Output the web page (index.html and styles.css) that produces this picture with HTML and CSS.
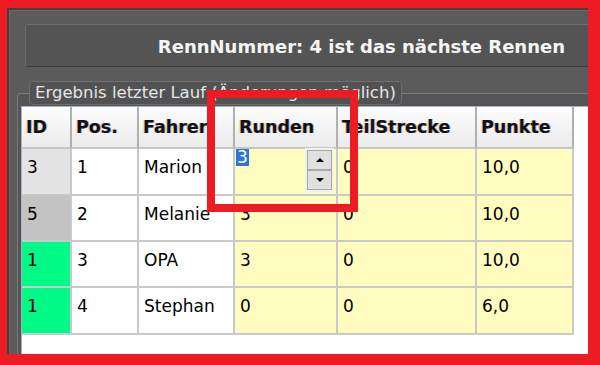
FILE: index.html
```html
<!DOCTYPE html>
<html lang="de">
<head>
    <meta charset="UTF-8">
    <meta name="viewport" content="width=device-width, initial-scale=1.0">
    <title>Rennergebnis</title>
    <link rel="stylesheet" href="styles.css">
</head>
<body>
    <div id="window">
        <div id="race-panel">RennNummer: 4 ist das nächste Rennen</div>

        <fieldset id="result-box">
            <legend>Ergebnis letzter Lauf (Änderungen möglich)</legend>
            <div class="grid">
                <div class="head">ID</div>
                <div class="head">Pos.</div>
                <div class="head">Fahrer</div>
                <div class="head">Runden</div>
                <div class="head">TeilStrecke</div>
                <div class="head">Punkte</div>

                <div class="cell id-light">3</div>
                <div class="cell">1</div>
                <div class="cell">Marion</div>
                <div class="cell yellow edit">
                    <span class="sel">3</span>
                    <span class="spin"><span class="up"></span><span class="down"></span></span>
                </div>
                <div class="cell yellow">0</div>
                <div class="cell yellow">10,0</div>

                <div class="cell id-gray">5</div>
                <div class="cell">2</div>
                <div class="cell">Melanie</div>
                <div class="cell yellow">3</div>
                <div class="cell yellow">0</div>
                <div class="cell yellow">10,0</div>

                <div class="cell id-green">1</div>
                <div class="cell">3</div>
                <div class="cell">OPA</div>
                <div class="cell yellow">3</div>
                <div class="cell yellow">0</div>
                <div class="cell yellow">10,0</div>

                <div class="cell id-green">1</div>
                <div class="cell">4</div>
                <div class="cell">Stephan</div>
                <div class="cell yellow">0</div>
                <div class="cell yellow">0</div>
                <div class="cell yellow">6,0</div>
            </div>
        </fieldset>
    </div>

    <div id="frame"></div>
    <div id="marker"></div>
</body>
</html>
```

FILE: styles.css
```css
*{
    box-sizing: border-box;
}
body{
    margin: 0;
    width: 600px;
    height: 365px;
    overflow: hidden;
    background-color: #5b5b5b;
    font-family: "DejaVu Sans", Verdana, sans-serif;
}
#window{
    margin: 8px 0 0 7px;
    height: 357px;
    border-top: 2px solid #424242;
    border-left: 2px solid #424242;
    box-shadow: inset 1px 1px 0 #676767;
    background-color: #5b5b5b;
}
#race-panel{
    margin: 14px 5px 0 16px;
    height: 43px;
    padding: 11px 29px 0 0;
    border: 1px solid #6c6c6c;
    border-bottom-color: #3d3d3d;
    border-radius: 3px;
    background-color: #545454;
    color: #f5f5f5;
    font-size: 18px;
    font-weight: bold;
    line-height: 21px;
    text-align: right;
}
#result-box{
    margin: 14px -30px 0 8px;
    padding: 1px 0 0 3px;
    min-width: 0;
    border: 1px solid #7a7a7a;
    border-right: none;
    border-bottom: none;
    border-radius: 4px 0 0 0;
    background-color: #555;
}
legend{
    margin-left: 8px;
    padding: 0 5px;
    border: 1px solid #6e6e6e;
    border-radius: 4px;
    background-color: #525252;
    color: #e6e6e6;
    font-size: 16.5px;
    line-height: 22px;
}
.grid{
    display: grid;
    grid-template-columns: 50px 67px 96px 103px 139px 97px;
    grid-template-rows: 42px 47px 46px 46px 47px;
    align-content: start;
    height: 270px;
    border: 1px solid #a3b3c9;
    border-right: none;
    background-color: white;
}
.head{
    padding: 10px 0 0 4px;
    border-right: 2px solid #b0b0b0;
    border-bottom: 2px solid #c6c6c6;
    background: linear-gradient(#fdfdfd, #ebebeb);
    color: #111;
    font-size: 17.5px;
    font-weight: bold;
    line-height: 20px;
    white-space: nowrap;
    overflow: hidden;
    text-shadow: -1px 0 rgba(220, 130, 20, 0.45), 1px 0 rgba(30, 80, 210, 0.35);
}
.cell{
    padding: 8px 0 0 5px;
    border-right: 2px solid #c9c9c9;
    border-bottom: 2px solid #c9c9c9;
    color: #000;
    font-size: 17px;
    line-height: 20px;
    white-space: nowrap;
}
.yellow{
    background-color: #fffcc0;
}
.id-light{
    background-color: #e3e3e3;
}
.id-gray{
    background-color: #c3c3c3;
}
.id-green{
    background-color: #00fa87;
}
.edit{
    display: flex;
    justify-content: space-between;
    align-items: flex-start;
    padding: 0 4px 0 1px;
}
.sel{
    padding: 0 1px;
    background-color: #2f74da;
    color: white;
    line-height: 17px;
}
.spin{
    display: flex;
    flex-direction: column;
    margin-top: 1px;
    box-shadow: 0 0 0 2px #f3f3ee;
}
.spin span{
    display: flex;
    align-items: center;
    justify-content: center;
    width: 25px;
    height: 20px;
    border: 1px solid #a8a8a8;
    background-color: #e0e0e0;
}
.up::before, .down::before{
    content: "";
    border-left: 4px solid transparent;
    border-right: 4px solid transparent;
}
.up::before{
    border-bottom: 4px solid #000;
}
.down::before{
    border-top: 4px solid #000;
}
#frame{
    position: absolute;
    top: 0;
    left: 0;
    width: 600px;
    height: 365px;
    border-style: solid;
    border-color: #ed1c24;
    border-width: 8px 12px 11px 7px;
}
#marker{
    position: absolute;
    left: 207px;
    top: 90px;
    width: 151px;
    height: 122px;
    border: 8px solid #ed1c24;
}
```
